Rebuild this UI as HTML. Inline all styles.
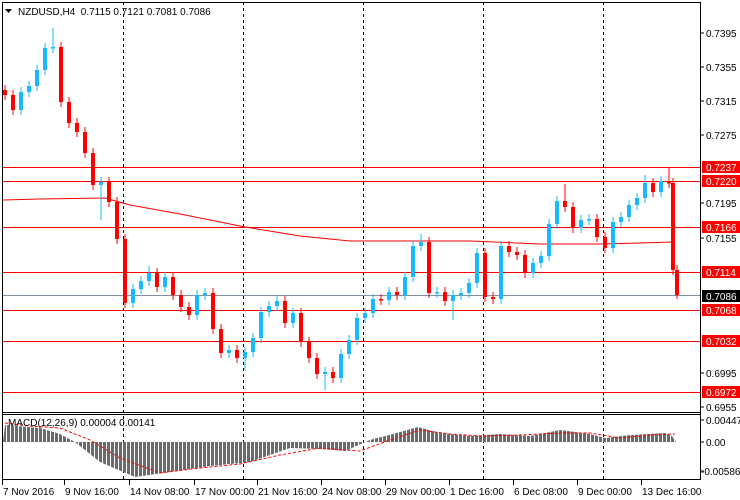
<!DOCTYPE html>
<html><head><meta charset="utf-8"><style>
html,body{margin:0;padding:0;background:#fff;width:740px;height:500px;overflow:hidden}
svg{display:block;font-family:"Liberation Sans",sans-serif;font-size:10px}
</style></head><body>
<svg width="740" height="500" xmlns="http://www.w3.org/2000/svg">
<defs><pattern id="hp" width="4" height="10" patternUnits="userSpaceOnUse" x="3"><rect width="3" height="10" fill="#6a6a6a"/></pattern></defs>
<rect width="740" height="500" fill="#fff"/>
<g stroke="#000" stroke-dasharray="3,3">
<path d="M123.5 2V480M243.5 2V480M363.5 2V480M483.5 2V480M603.5 2V480"/>
</g>
<g stroke="#f00">
<path d="M2 167.5H700M2 181.5H700M2 227.5H700M2 272.5H700M2 310.5H700M2 341.5H700M2 392.5H700"/>
</g>
<path d="M2 295.5H700" stroke="#8090a0"/>
<path d="M3 200L40 199L105 198L130 205L180 214L245 227L300 236L350 241L470 241L540 244L600 244L640 243L672 242" fill="none" stroke="#f00"/>
<!-- red candles -->
<g stroke="#f00" fill="none">
<path d="M5 85V100M13 90V115M61 42V107M69 97V128M77 118V137M85 127V158M93 148V190M109 177V207M117 197V244M125 234V308M157 268V292M173 272V300M181 290V312M189 302V320M213 288V334M221 324V358M237 345V363M285 296V328M301 308V347M309 337V363M317 353V379M333 367V383M381 294V305M397 287V300M429 237V298M445 287V306M485 248V302M493 292V304M509 241V257M517 247V260M525 250V278M565 184V212M573 202V233M597 214V242M605 232V253M653 178V197M669 168V188M673 178V275M677 265V299"/>
<path stroke-width="4" d="M5 90V95M13 95V110M61 47V102M69 102V123M77 123V132M85 132V153M93 153V185M109 182V202M117 202V239M125 239V303M157 273V287M173 277V295M181 295V307M189 307V315M213 293V329M221 329V353M237 350V358M285 301V323M301 313V342M309 342V358M317 358V374M333 372V378M381 299V300.5M397 292V295M429 242V293M445 292V301M485 253V297M493 297V299M509 246V252M517 252V255M525 255V273M565 201V207M573 207V228M597 219V237M605 237V248M653 183V192M669 181V183.5M673 183V270M677 270V295"/>
</g>
<!-- blue candles -->
<g stroke="#1ab8ff" fill="none">
<path d="M21 87V115M29 81V97M37 65V91M45 43V75M53 28V53M101 177V220M133 284V308M141 276V294M149 266V286M165 272V292M197 290V320M205 288V300M229 345V358M245 347V370M253 333V357M261 307V343M269 301V317M277 296V311M293 308V328M325 367V390M341 349V383M349 335V359M357 313V345M365 308V323M373 294V318M389 287V305M405 272V300M413 241V282M421 234V251M437 287V298M453 290V320M461 288V300M469 278V298M477 248V288M501 241V304M533 258V278M541 251V268M549 219V261M557 196V229M581 215V233M589 214V225M613 217V253M621 212V227M629 200V222M637 193V210M645 175V203M661 176V197"/>
<path stroke-width="4" d="M21 92V110M29 86V92M37 70V86M45 48V70M53 47V48.5M101 182V185M133 289V303M141 281V289M149 273V281M165 277V287M197 295V315M205 293V295M229 350V353M245 352V358M253 338V352M261 312V338M269 306V312M277 301V306M293 313V323M325 372V374M341 354V378M349 340V354M357 318V340M365 313V318M373 299V313M389 292V300M405 277V295M413 246V277M421 242V246M437 292V293.5M453 295V301M461 293V295M469 283V293M477 253V283M501 246V299M533 263V273M541 256V263M549 224V256M557 201V224M581 220V228M589 219V220.5M613 222V248M621 217V222M629 205V217M637 198V205M645 183V198M661 181V192"/>
</g>
<!-- MACD -->
<polygon fill="url(#hp)" points="3,442 5,425 40,428 60,434 75,442 100,462 135,477 170,472 210,466 250,462 290,448 320,449 345,451 370,440 400,432 418,427 440,433 470,436 500,434 530,436 560,430 590,434 605,438 630,435 665,433 672,436 676,442 678,442"/>
<path d="M5 423L30 426L60 428L90 440L120 458L160 473L200 468L240 464L280 455L320 448L360 451L390 440L420 430L450 434L480 436L520 435L560 433L590 433L620 438L650 435L675 434" fill="none" stroke="#f00" stroke-dasharray="3,2"/>
<!-- borders -->
<g stroke="#000" fill="none">
<path d="M2 2.5H701M2.5 2V480M700.5 2V480M2 412.5H701M2 414.5H701M2 479.5H701"/>
<path d="M700 33H704M700 67H704M700 101H704M700 135H704M700 203H704M700 238H704M700 373H704M700 407H704M700 420H704M700 442H704M700 471H704"/>
<path d="M2.5 480V485M64.5 480V485M129.5 480V485M194.5 480V485M257.5 480V485M321.5 480V485M385.5 480V485M449.5 480V485M513.5 480V485M577.5 480V485M641.5 480V485"/>
</g>
<g fill="#000">
<text x="706" y="37">0.7395</text><text x="706" y="71">0.7355</text><text x="706" y="105">0.7315</text><text x="706" y="139">0.7275</text><text x="706" y="207">0.7195</text><text x="706" y="242">0.7155</text><text x="706" y="377">0.6995</text><text x="706" y="411">0.6955</text><text x="706" y="302">0.7075</text>
<text x="706" y="424">0.00447</text><text x="706" y="446">0.00</text><text x="701" y="475">-0.00586</text>
</g>
<g fill="#f00"><rect x="702" y="161" width="38" height="12"/><rect x="702" y="175" width="38" height="12"/><rect x="702" y="221" width="38" height="12"/><rect x="702" y="266" width="38" height="12"/><rect x="702" y="304" width="38" height="12"/><rect x="702" y="335" width="38" height="12"/><rect x="702" y="386" width="38" height="12"/></g>
<rect x="702" y="290" width="38" height="12" fill="#000"/>
<g fill="#fff">
<text x="706" y="171">0.7237</text><text x="706" y="185">0.7220</text><text x="706" y="231">0.7166</text><text x="706" y="276">0.7114</text><text x="706" y="314">0.7068</text><text x="706" y="345">0.7032</text><text x="706" y="396">0.6972</text><text x="706" y="300">0.7086</text>
</g>
<g fill="#000">
<text x="3" y="495">7 Nov 2016</text><text x="65" y="495">9 Nov 16:00</text><text x="130" y="495">14 Nov 08:00</text><text x="195" y="495">17 Nov 00:00</text><text x="258" y="495">21 Nov 16:00</text><text x="322" y="495">24 Nov 08:00</text><text x="386" y="495">29 Nov 00:00</text><text x="450" y="495">1 Dec 16:00</text><text x="514" y="495">6 Dec 08:00</text><text x="578" y="495">9 Dec 00:00</text><text x="642" y="495">13 Dec 16:00</text>
<path d="M5 9L12 9L8.5 13Z"/>
<text x="18" y="15">NZDUSD,H4&#160; 0.7115 0.7121 0.7081 0.7086</text>
<text x="8" y="426">MACD(12,26,9) 0.00004 0.00141</text>
</g>
</svg>
</body></html>
